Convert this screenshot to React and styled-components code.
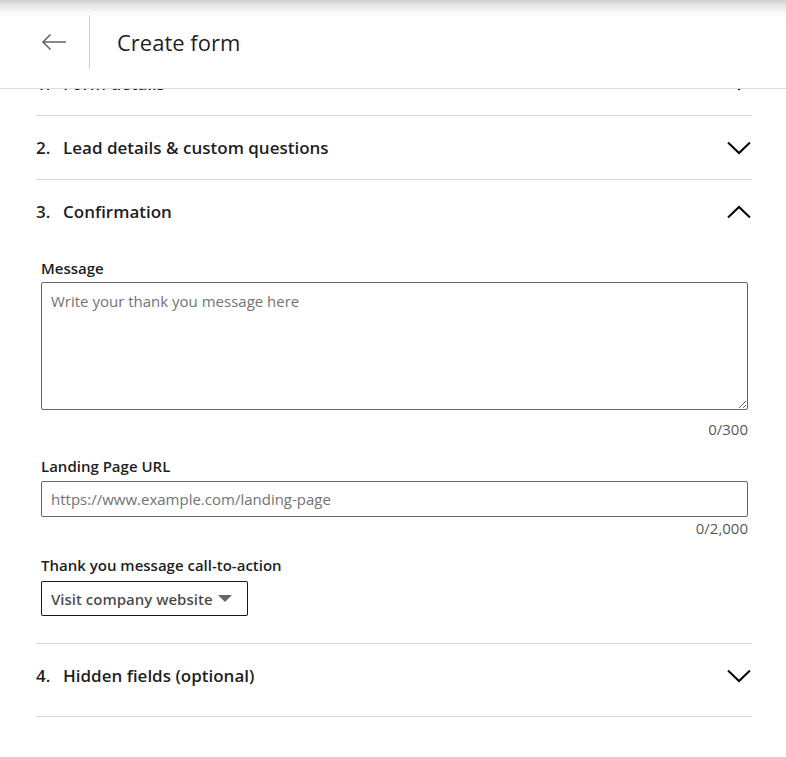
import React, { useLayoutEffect, useRef } from "react";
import styled, { createGlobalStyle } from "styled-components";

const Global = createGlobalStyle`
  html, body { margin: 0; padding: 0; background: #fff; }
  body {
    font-family: "Open Sans", "Noto Sans", "Liberation Sans", sans-serif;
    color: rgba(0, 0, 0, 0.9);
  }
  * { box-sizing: border-box; }
`;

const Viewport = styled.div`
  height: 757px;
  overflow-y: auto;
  scrollbar-width: none;
  &::-webkit-scrollbar { display: none; }
  background: #fff;
`;

const Header = styled.header`
  position: sticky;
  top: 0;
  z-index: 2;
  height: 89px;
  display: flex;
  align-items: center;
  background: linear-gradient(to bottom, #cfcfcf 0px, #e8e8e8 6px, #f8f8f8 12px, #fff 18px);
  border-bottom: 1px solid #dcdcdc;
  padding-bottom: 4px;
`;

const BackButton = styled.button`
  width: 90px;
  height: 54px;
  display: flex;
  align-items: center;
  justify-content: flex-start;
  padding: 0 0 0 41px;
  border: none;
  border-right: 1px solid #d0d0d0;
  background: transparent;
  color: #666;
  cursor: pointer;
`;

const Title = styled.h1`
  margin: 0 0 0 27px;
  font-size: 22px;
  font-weight: 400;
  color: rgba(0, 0, 0, 0.9);
`;

const Sections = styled.div`
  padding: 24px 34px 400px 36px;
`;

const SectionList = styled.div`
  padding-bottom: 9px;
  border-bottom: 1px solid #dcdcdc;
`;

const Section = styled.section`
  border-top: ${(p) => (p.$first ? "none" : "1px solid #dcdcdc")};
`;

const SectionHead = styled.div`
  height: 63px;
  display: flex;
  align-items: center;
  justify-content: space-between;
  cursor: pointer;
`;

const SectionTitle = styled.h2`
  margin: 0;
  display: flex;
  font-size: 17px;
  font-weight: 600;
  color: rgba(0, 0, 0, 0.9);
`;

const StepNo = styled.span`
  width: 27px;
`;

const Chevron = styled.svg`
  width: 24px;
  height: 14px;
  margin-right: 1px;
  transform: ${(p) => (p.$open ? "rotate(180deg)" : "none")};
`;

const SectionBody = styled.div`
  padding: 15px 4px 27px 5px;
  display: flex;
  flex-direction: column;
`;

const Label = styled.label`
  font-size: 15px;
  font-weight: 600;
  line-height: 20px;
  color: rgba(0, 0, 0, 0.9);
  margin-bottom: 4px;
`;

const TextArea = styled.textarea`
  display: block;
  width: 100%;
  height: 128px;
  padding: 8px 9px;
  border: 1px solid #666;
  border-radius: 2px;
  font-family: inherit;
  font-size: 15px;
  line-height: 20px;
  resize: vertical;
  &::placeholder { color: #737373; }
`;

const TextInput = styled.input`
  display: block;
  width: 100%;
  height: 36px;
  margin-top: 1px;
  padding: 0 9px;
  border: 1px solid #666;
  border-radius: 2px;
  font-family: inherit;
  font-size: 15px;
  &::placeholder { color: #737373; }
`;

const Counter = styled.div`
  align-self: flex-end;
  font-size: 15px;
  line-height: 20px;
  color: rgba(0, 0, 0, 0.7);
  margin-top: ${(p) => p.$gap}px;
  margin-bottom: 17px;
`;

const DropButton = styled.button`
  align-self: flex-start;
  width: 207px;
  height: 35px;
  margin-top: 2px;
  display: flex;
  align-items: center;
  gap: 5px;
  padding: 0 9px;
  border: 1px solid rgba(0, 0, 0, 0.9);
  border-radius: 2px;
  background: #fff;
  font-family: inherit;
  font-size: 15px;
  font-weight: 600;
  color: rgba(0, 0, 0, 0.72);
  cursor: pointer;
`;

const Caret = styled.span`
  width: 0;
  height: 0;
  border-left: 7px solid transparent;
  border-right: 7px solid transparent;
  border-top: 7px solid #666;
`;

const ChevronIcon = ({ open }) => (
  <Chevron $open={open} viewBox="0 0 24 14" fill="none">
    <polyline points="1,1.5 12,12 23,1.5" stroke="#000" strokeWidth="2" />
  </Chevron>
);

const BackArrow = () => (
  <svg width="26" height="18" viewBox="0 0 26 18" fill="none">
    <path d="M25 9H2M9.5 1.5L2 9l7.5 7.5" stroke="currentColor" strokeWidth="1.6" />
  </svg>
);

const steps = [
  { n: "1.", title: "Form details" },
  { n: "2.", title: "Lead details & custom questions" },
  { n: "3.", title: "Confirmation", open: true },
  { n: "4.", title: "Hidden fields (optional)" },
];

function Confirmation() {
  return (
    <SectionBody>
      <Label>Message</Label>
      <TextArea placeholder="Write your thank you message here" />
      <Counter $gap={9}>0/300</Counter>
      <Label>Landing Page URL</Label>
      <TextInput placeholder="https://www.example.com/landing-page" />
      <Counter $gap={1}>0/2,000</Counter>
      <Label>Thank you message call-to-action</Label>
      <DropButton type="button">
        Visit company website
        <Caret />
      </DropButton>
    </SectionBody>
  );
}

export default function App() {
  const ref = useRef(null);
  useLayoutEffect(() => {
    if (ref.current) ref.current.scrollTop = 61;
  }, []);
  return (
    <>
      <Global />
      <Viewport ref={ref}>
        <Header>
          <BackButton type="button" aria-label="Back">
            <BackArrow />
          </BackButton>
          <Title>Create form</Title>
        </Header>
        <Sections>
          <SectionList>
            {steps.map((s, i) => (
              <Section key={s.n} $first={i === 0}>
                <SectionHead>
                  <SectionTitle>
                    <StepNo>{s.n}</StepNo>
                    {s.title}
                  </SectionTitle>
                  <ChevronIcon open={s.open} />
                </SectionHead>
                {s.open && <Confirmation />}
              </Section>
            ))}
          </SectionList>
        </Sections>
      </Viewport>
    </>
  );
}
